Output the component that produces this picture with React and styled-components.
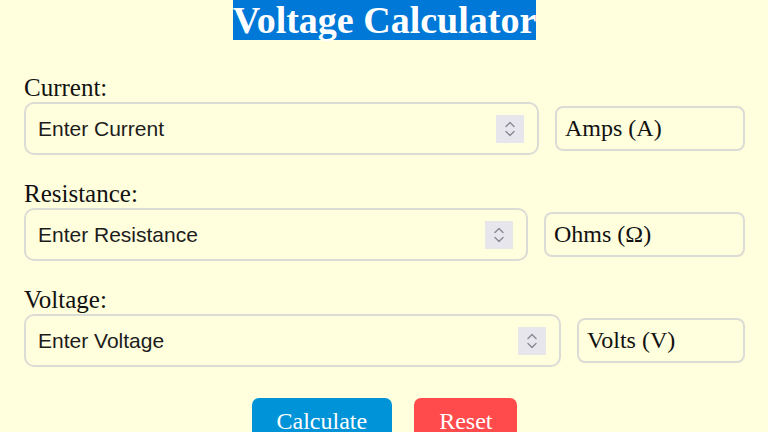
import React from "react";
import styled, { createGlobalStyle } from "styled-components";

const GlobalStyle = createGlobalStyle`
  html, body {
    margin: 0;
    padding: 0;
    background-color: #fffedd;
  }
  body {
    font-family: "Liberation Serif", "Times New Roman", serif;
    overflow: hidden;
  }
`

const Page = styled.div`
  display: flex;
  flex-direction: column;
  padding: 0 23px 0 24px;
  height: 432px;
  box-sizing: border-box;
`

const TitleWrap = styled.div`
  text-align: center;
  margin-bottom: 34px;
`

const Title = styled.span`
  background-color: #0078d7;
  color: #ffffff;
  font-weight: bold;
  font-size: 38px;
  line-height: 40px;
  display: inline-block;
`

const Field = styled.div`
  display: flex;
  flex-direction: column;
  margin-bottom: 25px;
`

const Label = styled.label`
  font-size: 25px;
  line-height: 28px;
  color: #111;
`

const Row = styled.div`
  display: flex;
  align-items: center;
  gap: 16px;
`

const InputBox = styled.div`
  flex: 1;
  height: 53px;
  box-sizing: border-box;
  border: 2px solid #dcdcd6;
  border-radius: 10px;
  display: flex;
  align-items: center;
  padding: 0 13px 0 12px;
`

const NumberInput = styled.input`
  flex: 1;
  border: none;
  outline: none;
  background: transparent;
  font-family: "Liberation Sans", Arial, sans-serif;
  font-size: 21px;
  color: #222;
  padding: 0;
  &::placeholder {
    color: #1c1c1c;
  }
`

const Spinner = styled.div`
  width: 28px;
  height: 28px;
  background-color: #e6e6ec;
  display: flex;
  align-items: center;
  justify-content: center;
`

const Unit = styled.div`
  width: ${(p) => p.$width}px;
  height: 45px;
  box-sizing: border-box;
  border: 2px solid #dcdcd6;
  border-radius: 8px;
  display: flex;
  align-items: center;
  padding-left: 8px;
  font-size: 24px;
  color: #111;
`

const Buttons = styled.div`
  display: flex;
  justify-content: center;
  gap: 22px;
  margin-top: 6px;
`

const Button = styled.button`
  background-color: ${(p) => p.$bg};
  color: #fff;
  border: none;
  border-radius: 7px;
  font-family: "Liberation Serif", "Times New Roman", serif;
  font-size: 24px;
  padding: 10px 25px;
  cursor: pointer;
`

const SpinIcon = () => (
  <svg width="12" height="20" viewBox="0 0 12 20" fill="none" stroke="#8a8a92" strokeWidth="1.4" strokeLinecap="round" strokeLinejoin="round">
    <path d="M2 7.5 L6 3.5 L10 7.5" />
    <path d="M2 12.5 L6 16.5 L10 12.5" />
  </svg>
)

const fields = [
  { label: "Current:", placeholder: "Enter Current", unit: "Amps (A)", width: 190 },
  { label: "Resistance:", placeholder: "Enter Resistance", unit: "Ohms (\u03A9)", width: 201 },
  { label: "Voltage:", placeholder: "Enter Voltage", unit: "Volts (V)", width: 168 },
]

const App = () => {
  return (
    <>
      <GlobalStyle />
      <Page>
        <TitleWrap>
          <Title>Voltage Calculator</Title>
        </TitleWrap>
        {fields.map((f) => (
          <Field key={f.label}>
            <Label>{f.label}</Label>
            <Row>
              <InputBox>
                <NumberInput type="text" placeholder={f.placeholder} />
                <Spinner>
                  <SpinIcon />
                </Spinner>
              </InputBox>
              <Unit $width={f.width}>{f.unit}</Unit>
            </Row>
          </Field>
        ))}
        <Buttons>
          <Button $bg="#0093d8">Calculate</Button>
          <Button $bg="#ff4b4b">Reset</Button>
        </Buttons>
      </Page>
    </>
  );
}

export default App
